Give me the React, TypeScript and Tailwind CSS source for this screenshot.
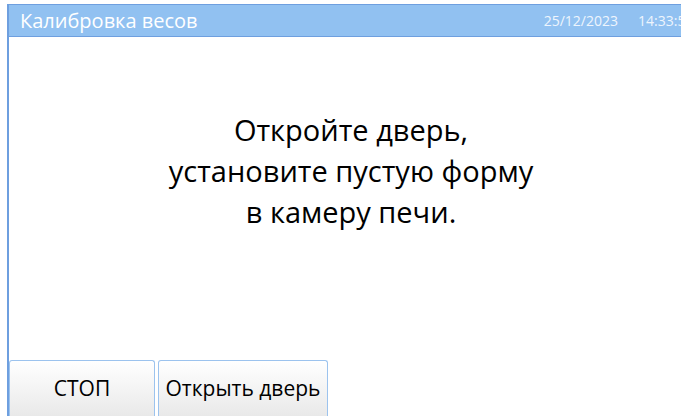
import React from "react";

const font = { fontFamily: '"Open Sans", "Noto Sans", sans-serif' };

const Button = ({ label, width }: { label: string; width: string }) => (
  <button
    className={`${width} h-full rounded-t-[3px] border border-b-0 border-[#9cc3ee] bg-gradient-to-b from-white to-[#e9e9e9] text-[21px] text-black`}
    style={font}
  >
    {label}
  </button>
);

export default function App() {
  return (
    <div className="w-[681px] h-[416px] overflow-hidden bg-white pt-[4px] pl-[7px]" style={font}>
      <div className="w-[719px] h-full flex flex-col border-l-2 border-[#6e9fdf]">
        {/* header strip */}
        <div className="h-[33px] flex items-center bg-[#91c1f1] border-t border-b border-[#6e9fdf] pl-[11px]">
          <span className="text-[20px] text-white leading-none">Калибровка весов</span>
          <span className="ml-auto text-[14px] text-[#eef5fd]">25/12/2023</span>
          <span className="ml-[20px] w-[88px] text-[14px] text-[#eef5fd]">14:33:51</span>
        </div>

        {/* message */}
        <div className="flex-1 flex items-center justify-center pb-[56px] pr-[33px]">
          <p className="text-center text-[29px] leading-[41px] text-black">
            Откройте дверь,
            <br />
            установите пустую форму
            <br />в камеру печи.
          </p>
        </div>

        {/* bottom buttons */}
        <div className="h-[56px] flex gap-[3px]">
          <Button label="СТОП" width="w-[146px]" />
          <Button label="Открыть дверь" width="w-[170px]" />
        </div>
      </div>
    </div>
  );
}
